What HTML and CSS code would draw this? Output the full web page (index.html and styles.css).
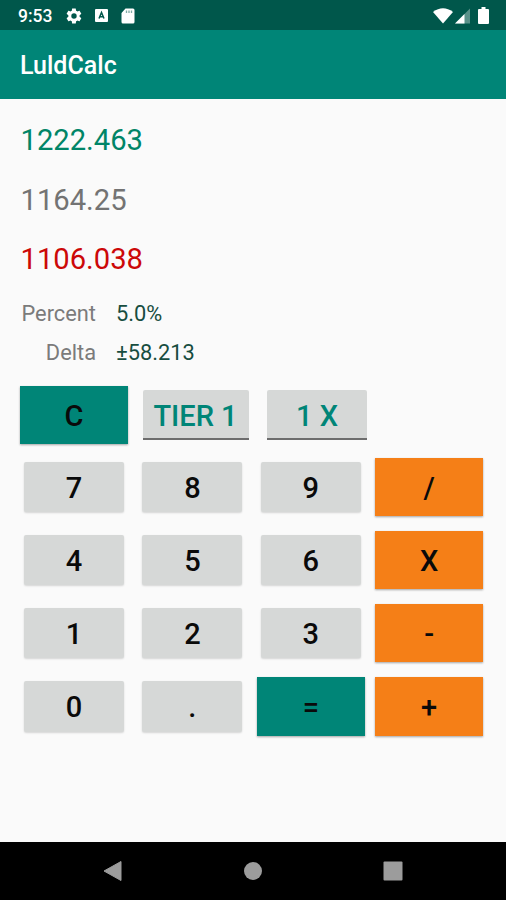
FILE: index.html
```html
<!DOCTYPE html>
<html lang="en">
<head>
	<meta charset="utf-8">
	<title>LuldCalc</title>
	<link rel="stylesheet" href="styles.css">
</head>
<body>
<div class="screen">
	<div class="status">
		<span class="time">9:53</span>
		<svg class="gear" width="18" height="18" viewBox="0 0 24 24"><path fill="#fff" fill-rule="evenodd" d="M19.4 13c.1-.3.1-.7.1-1s0-.7-.1-1l2.1-1.6c.2-.2.3-.4.1-.7l-2-3.4c-.1-.2-.4-.3-.6-.2l-2.5 1c-.5-.4-1.1-.7-1.7-1l-.4-2.6c0-.3-.2-.5-.5-.5h-4c-.3 0-.5.2-.5.4l-.3 2.7c-.7.3-1.2.6-1.7 1l-2.5-1c-.3-.1-.5 0-.6.2l-2 3.4c-.2.3-.1.5.1.7L4.5 11c0 .3-.1.7-.1 1s.1.7.1 1l-2.1 1.6c-.2.2-.3.4-.1.7l2 3.4c.1.2.3.3.6.2l2.5-1c.5.4 1 .7 1.7 1l.3 2.7c0 .2.2.4.5.4h4c.3 0 .5-.2.5-.4l.4-2.7c.6-.3 1.2-.6 1.7-1l2.5 1c.2.1.5 0 .6-.2l2-3.4c.1-.3.1-.5-.1-.7zM12 15.6a3.6 3.6 0 1 1 0-7.2 3.6 3.6 0 0 1 0 7.2z"/></svg>
		<svg class="letter" width="13" height="13" viewBox="0 0 13 13"><rect width="13" height="13" rx="1" fill="#fff"/><path d="M4 9.5 6.5 3.5 9 9.500M5 7.800h3" fill="none" stroke="#00574b" stroke-width="1.5"/></svg>
		<svg class="card" width="14" height="16" viewBox="0 0 14 16"><path d="M4.5.5H12A1.5 1.5 0 0 1 13.5 2v12a1.5 1.5 0 0 1-1.5 1.5H2A1.5 1.5 0 0 1 .5 14V5z" fill="#fff"/><path d="M5.5 2.5V5M8 2.5V5M10.5 2.5V5" stroke="#00574b" stroke-opacity=".5" stroke-width="1.3"/></svg>
		<svg class="wifi" width="20" height="16" viewBox="0 0 20 16"><path d="M0 4Q10-3.5 20 4L10 15.5z" fill="#fff"/></svg>
		<svg class="signal" width="15" height="16" viewBox="0 0 15 16"><path d="M0 15.5 15 .5v15z" fill="#fff" fill-opacity=".35"/><path d="M0 15.5 9.5 6v9.5z" fill="#fff"/></svg>
		<svg class="battery" width="11" height="17" viewBox="0 0 11 17"><path d="M3.5 0h4v2H10a1 1 0 0 1 1 1v13a1 1 0 0 1-1 1H1a1 1 0 0 1-1-1V3a1 1 0 0 1 1-1h2.5z" fill="#fff"/></svg>
	</div>
	<div class="bar">LuldCalc</div>
	<div class="content">
		<div class="price upper">1222.463</div>
		<div class="price">1164.25</div>
		<div class="price lower">1106.038</div>
		<div class="info">
			<span class="label">Percent</span><span class="val">5.0%</span>
			<span class="label">Delta</span><span class="val">±58.213</span>
		</div>
		<div class="options">
			<button class="key green clear">C</button>
			<button class="toggle tier">TIER 1</button>
			<button class="toggle">1 X</button>
		</div>
		<div class="keys">
			<button class="key">7</button>
			<button class="key">8</button>
			<button class="key">9</button>
			<button class="key orange">/</button>
			<button class="key">4</button>
			<button class="key">5</button>
			<button class="key">6</button>
			<button class="key orange">X</button>
			<button class="key">1</button>
			<button class="key">2</button>
			<button class="key">3</button>
			<button class="key orange">-</button>
			<button class="key">0</button>
			<button class="key">.</button>
			<button class="key green">=</button>
			<button class="key orange">+</button>
		</div>
	</div>
	<div class="nav">
		<svg width="20" height="22" viewBox="0 0 20 22"><path d="M1 11 18 1.5v19z" fill="#9c9c9c" stroke="#9c9c9c" stroke-linejoin="round"/></svg>
		<svg width="18" height="18" viewBox="0 0 18 18"><circle cx="9" cy="9" r="9" fill="#9c9c9c"/></svg>
		<svg width="20" height="20" viewBox="0 0 20 20"><rect x=".5" y=".5" width="19" height="19" rx="1" fill="#9c9c9c"/></svg>
	</div>
</div>
</body>
</html>
```
FILE: styles.css
```css
body{
	margin: 0;
	font-family: Roboto, "Liberation Sans", sans-serif;
	background-color: #fafafa;
}
.screen{
	display: flex;
	flex-direction: column;
	height: 900px;
	overflow: hidden;
}
.status{
	display: flex;
	align-items: center;
	box-sizing: border-box;
	height: 30px;
	padding: 1px 17px 0 18px;
	background-color: #00574b;
	color: #fff;
}
.time{
	width: 47px;
	font-size: 17.5px;
	font-weight: 500;
}
.letter{
	margin-left: 12px;
}
.card{
	margin-left: 13px;
}
.wifi{
	margin-left: auto;
}
.signal{
	margin-left: 2px;
}
.battery{
	margin-left: 8px;
}
.bar{
	height: 68.5px;
	line-height: 72px;
	padding-left: 20px;
	background-color: #008577;
	color: #fff;
	font-size: 25px;
	font-weight: 500;
}
.content{
	flex: 1;
	padding: 11.5px 23px 0 20px;
}
.price{
	height: 59.5px;
	line-height: 60px;
	padding-left: .5px;
	font-size: 29.2px;
	color: #737373;
}
.upper{
	color: #008567;
}
.lower{
	color: #cc0808;
}
.info{
	display: grid;
	grid-template-columns: 76px auto;
	grid-auto-rows: 39.5px;
	column-gap: 20px;
	margin-top: 5px;
	line-height: 40px;
	font-size: 21.8px;
}
.label{
	color: #7b7b7b;
	text-align: right;
}
.val{
	color: #174d40;
}
.options{
	display: flex;
	align-items: flex-start;
	height: 58px;
	margin-top: 13.5px;
}
.keys{
	display: grid;
	grid-template-columns: repeat(4, 108px);
	grid-auto-rows: 58.5px;
	gap: 14.7px 10.4px;
	margin-top: 13.5px;
}
button{
	padding: 0;
	border: 0;
	font-family: inherit;
	font-size: 29px;
	font-weight: 500;
}
.key{
	margin: 4px;
	padding-top: 2px;
	border-radius: 2px;
	background-color: #d6d8d7;
	color: #0a0a0a;
	box-shadow: 0 1px 2px rgba(0,0,0,.15);
}
.green, .orange{
	margin: 0;
	border-radius: 0;
	box-shadow: 0 1px 2px rgba(0,0,0,.35);
}
.green{
	background-color: #008577;
}
.orange{
	background-color: #f57f17;
}
.clear{
	width: 108px;
	height: 58px;
}
.toggle{
	width: 100px;
	height: 50px;
	margin: 4px 0 0 18.5px;
	padding-top: 4px;
	border-bottom: 2px solid #6d6d6d;
	border-radius: 2px 2px 0 0;
	background-color: #d6d8d7;
	color: #008577;
}
.tier{
	width: 106px;
	margin-left: 14.5px;
}
.nav{
	display: flex;
	justify-content: space-between;
	align-items: center;
	box-sizing: border-box;
	height: 58px;
	padding: 0 103px;
	background-color: #000;
}
```
